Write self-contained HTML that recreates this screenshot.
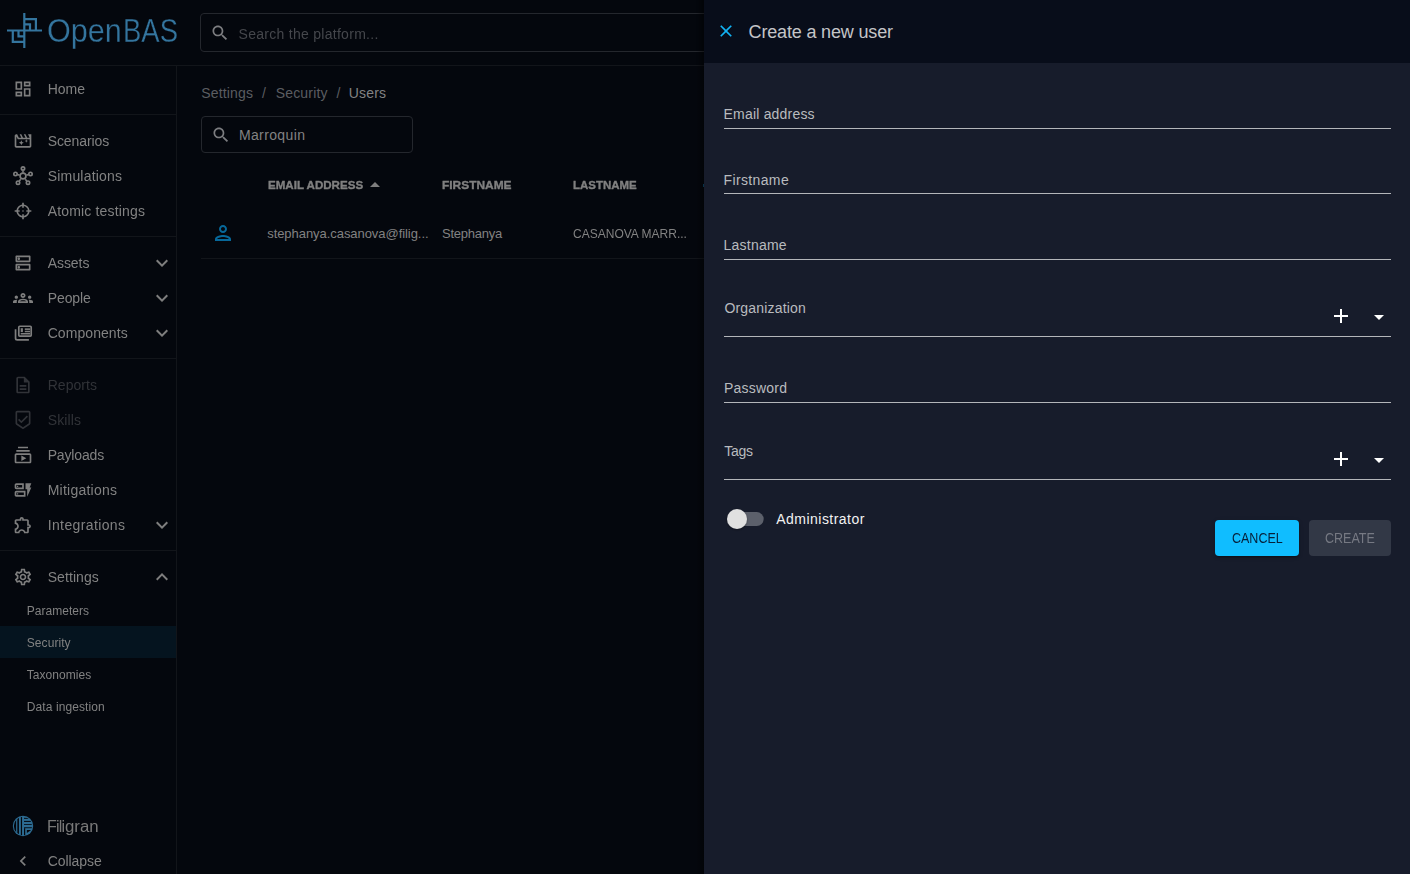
<!DOCTYPE html>
<html lang="en"><head><meta charset="utf-8"><title>OpenBAS - Users</title>
<style>
html,body{margin:0;padding:0}
body{width:1410px;height:874px;overflow:hidden;position:relative;background:#04070d;font-family:"Liberation Sans",sans-serif}
.a{position:absolute}
.t{position:absolute;white-space:nowrap;line-height:20px;height:20px;margin:0;font-weight:400}
button{border:0;padding:0;margin:0;font:inherit;display:block;text-align:left;overflow:visible}
.ic{position:absolute;display:block}
.ln{position:absolute;background:#12151a}
.layer{position:absolute;overflow:hidden;will-change:transform}
</style></head>
<body>
<nav id="sidebar" class="layer" style="left:0;top:0;width:177px;height:874px">
<div class="ln" style="left:0;top:65px;width:177px;height:1px"></div>
<div class="ln" style="left:176px;top:66px;width:1px;height:808px"></div>
<div class="ln" style="left:0;top:114px;width:176px;height:1px"></div>
<div class="ln" style="left:0;top:236px;width:176px;height:1px"></div>
<div class="ln" style="left:0;top:358px;width:176px;height:1px"></div>
<div class="ln" style="left:0;top:550px;width:176px;height:1px"></div>
<div class="a" style="left:0;top:626px;width:176px;height:32px;background:#05141f"></div>
<svg class="ic" style="left:0;top:0" width="48" height="60" viewBox="0 0 48 60" fill="none" stroke="#34759e" stroke-width="2.2"><path d="M24.3 13v35M7 30.5h35"/><path d="M24.3 19.1H35.9V30.5M24.3 24.4H30V30.5"/><path d="M12.8 30.5V41.9H24.3M18.5 30.5V36.3H24.3"/></svg>
<svg class="ic" style="left:13px;top:78.5px" width="20" height="20" viewBox="0 0 24 24" fill="#7e7e7e" ><path d="M19 5v2h-4V5h4M9 5v6H5V5h4m10 8v6h-4v-6h4M9 17v2H5v-2h4M21 3h-8v6h8V3zM11 3H3v10h8V3zm10 8h-8v10h8V11zm-10 4H3v6h8v-6z"/></svg>
<svg class="ic" style="left:13px;top:130.5px" width="20" height="20" viewBox="0 0 24 24" fill="#7e7e7e" ><path d="M10 11l-.94 2.06L7 14l2.06.94L10 17l.94-2.06L13 14l-2.06-.94zm8.01-7l2 4h-3l-2-4h-2l2 4h-3l-2-4h-2l2 4h-3l-2-4h-1c-1.1 0-1.99.9-1.99 2l-.01 12c0 1.1.9 2 2 2h16c1.1 0 1.99-.9 1.99-2V4h-3.990zm2 14h-16V6.470L5.770 10H16l-.63 1.370L14 12l1.370.63L16 14l.63-1.370L18 12l-1.370-.63L16 10h4.010v8z"/></svg>
<svg class="ic" style="left:13px;top:200.5px" width="20" height="20" viewBox="0 0 24 24" fill="#7e7e7e" ><path d="M11,2V4.070C7.380,4.530 4.530,7.380 4.070,11H2V13H4.070C4.530,16.620 7.380,19.470 11,19.930V22H13V19.930C16.620,19.470 19.470,16.620 19.930,13H22V11H19.930C19.470,7.380 16.620,4.530 13,4.070V2M11,6.080V8H13V6.090C15.500,6.500 17.500,8.500 17.920,11H16V13H17.910C17.500,15.500 15.500,17.500 13,17.920V16H11V17.910C8.500,17.500 6.500,15.500 6.080,13H8V11H6.090C6.500,8.500 8.500,6.500 11,6.080M12,11A1,1 0 0,0 11,12A1,1 0 0,0 12,13A1,1 0 0,0 13,12A1,1 0 0,0 12,11Z"/></svg>
<svg class="ic" style="left:13px;top:252.5px" width="20" height="20" viewBox="0 0 24 24" fill="#7e7e7e" ><path d="M19 15v4H5v-4h14m1-2H4c-.55 0-1 .45-1 1v6c0 .55.45 1 1 1h16c.55 0 1-.45 1-1v-6c0-.55-.45-1-1-1zM7 18.500c-.82 0-1.500-.67-1.500-1.500s.68-1.500 1.500-1.500 1.500.67 1.500 1.500-.67 1.500-1.500 1.500zM19 5v4H5V5h14m1-2H4c-.55 0-1 .45-1 1v6c0 .55.45 1 1 1h16c.55 0 1-.45 1-1V4c0-.55-.45-1-1-1zM7 8.500c-.82 0-1.500-.67-1.500-1.500S6.180 5.500 7 5.500s1.500.68 1.500 1.500S7.830 8.500 7 8.500z"/></svg>
<svg class="ic" style="left:13px;top:287.5px" width="20" height="20" viewBox="0 0 24 24" fill="#7e7e7e" ><path d="M4 13c1.100 0 2-.9 2-2s-.9-2-2-2-2 .9-2 2 .9 2 2 2zm1.130 1.100c-.37-.06-.74-.1-1.130-.1-.99 0-1.930.21-2.780.58C.48 14.900 0 15.620 0 16.430V18h4.500v-1.610c0-.83.23-1.610.63-2.290zM20 13c1.100 0 2-.9 2-2s-.9-2-2-2-2 .9-2 2 .9 2 2 2zm4 3.430c0-.81-.48-1.530-1.220-1.850-.85-.37-1.790-.58-2.780-.58-.39 0-.76.04-1.130.1.400.68.630 1.460.630 2.290V18H24v-1.570zm-7.760-2.780c-1.170-.52-2.610-.9-4.240-.9-1.630 0-3.070.39-4.240.9C6.680 14.130 6 15.210 6 16.390V18h12v-1.610c0-1.180-.68-2.260-1.760-2.740zM8.070 16c.09-.23.130-.39.910-.69.970-.38 1.990-.56 3.020-.56s2.050.18 3.020.56c.77.300.810.460.910.690H8.070zM12 8c.55 0 1 .45 1 1s-.45 1-1 1-1-.45-1-1 .45-1 1-1m0-2c-1.660 0-3 1.340-3 3s1.340 3 3 3 3-1.340 3-3-1.340-3-3-3z"/></svg>
<svg class="ic" style="left:13px;top:374.5px" width="20" height="20" viewBox="0 0 24 24" fill="#313338" ><path d="M8 16h8v2H8zm0-4h8v2H8zm6-10H6c-1.100 0-2 .9-2 2v16c0 1.100.89 2 1.990 2H18c1.100 0 2-.9 2-2V8l-6-6zm4 18H6V4h7v5h5v11z"/></svg>
<svg class="ic" style="left:13px;top:409.5px" width="20" height="20" viewBox="0 0 24 24" fill="#313338" ><path d="M19 1H5c-1.100 0-1.990.9-1.990 2L3 15.930c0 .69.35 1.300.88 1.660L12 23l8.110-5.410c.53-.36.88-.97.88-1.660L21 3c0-1.100-.9-2-2-2zm-7 19.600l-7-4.660V3h14v12.930l-7 4.670zm-2.010-7.420l-2.580-2.590L6 12l4 4 8-8-1.420-1.410z"/></svg>
<svg class="ic" style="left:13px;top:444.5px" width="20" height="20" viewBox="0 0 24 24" fill="#7e7e7e" ><path d="M4 6h16v2H4zm2-4h12v2H6zm14 8H4c-1.100 0-2 .9-2 2v8c0 1.100.9 2 2 2h16c1.100 0 2-.9 2-2v-8c0-1.100-.9-2-2-2zm0 10H4v-8h16v8zm-10-7.270v6.530L16 16z"/></svg>
<svg class="ic" style="left:13px;top:479.5px" width="20" height="20" viewBox="0 0 24 24" fill="#7e7e7e" fill-rule="evenodd"><path d="M17 20v-9h-2V4h7l-2 5h2l-5 11zM15 13v7H4c-1.100 0-2-.9-2-2v-3c0-1.100.9-2 2-2h11zM13 15H4v3h9v-3zM6.250 15.750h-1.500v1.500h1.500v-1.500zM13 4v7H4c-1.100 0-2-.9-2-2V6c0-1.100.9-2 2-2h9zM11 6H4v3h7V6zM6.250 6.750h-1.500v1.500h1.500v-1.500z"/></svg>
<svg class="ic" style="left:13px;top:514.5px" width="20" height="20" viewBox="0 0 24 24" fill="#7e7e7e" ><path d="M10.500 4.500c.28 0 .5.22.5.5v2h6v6h2c.28 0 .5.22.5.5s-.22.5-.5.5h-2v6h-2.120c-.68-1.750-2.390-3-4.380-3s-3.700 1.250-4.380 3H4v-2.120c1.750-.68 3-2.390 3-4.380 0-1.990-1.240-3.700-2.990-4.380L4 7h6V5c0-.28.22-.5.5-.5m0-2C9.120 2.500 8 3.620 8 5H4c-1.100 0-1.990.9-1.990 2v3.800h.29c1.490 0 2.700 1.210 2.700 2.700s-1.210 2.700-2.700 2.700H2V20c0 1.100.9 2 2 2h3.800v-.3c0-1.490 1.210-2.700 2.700-2.700s2.700 1.210 2.700 2.700v.3H17c1.100 0 2-.9 2-2v-4c1.380 0 2.500-1.120 2.500-2.500S20.380 11 19 11V7c0-1.100-.9-2-2-2h-4c0-1.380-1.120-2.500-2.500-2.500z"/></svg>
<svg class="ic" style="left:13px;top:566.5px" width="20" height="20" viewBox="0 0 24 24" fill="#7e7e7e" ><path d="M19.430 12.980c.04-.32.07-.64.07-.98 0-.34-.03-.66-.07-.98l2.110-1.650c.19-.15.24-.42.12-.64l-2-3.460c-.09-.16-.26-.25-.44-.25-.06 0-.12.010-.17.030l-2.490 1c-.52-.4-1.080-.73-1.690-.98l-.38-2.650C14.460 2.180 14.250 2 14 2h-4c-.25 0-.46.18-.49.42l-.38 2.650c-.61.25-1.170.59-1.690.98l-2.490-1c-.06-.02-.12-.03-.18-.03-.17 0-.34.09-.43.25l-2 3.460c-.13.22-.07.49.12.64l2.110 1.650c-.04.32-.07.65-.07.98 0 .33.03.66.07.98l-2.110 1.650c-.19.15-.24.42-.12.64l2 3.460c.09.16.26.25.44.25.06 0 .12-.010.17-.030l2.490-1c.52.4 1.080.73 1.690.98l.38 2.650c.03.24.24.42.49.42h4c.25 0 .46-.18.49-.42l.38-2.650c.61-.25 1.170-.59 1.690-.98l2.490 1c.06.02.12.03.18.03.17 0 .34-.09.43-.25l2-3.460c.12-.22.07-.49-.12-.64l-2.110-1.650zm-1.980-1.710c.04.31.05.52.05.73 0 .21-.02.43-.05.73l-.14 1.130.89.7 1.080.84-.7 1.210-1.270-.51-1.040-.42-.9.68c-.43.32-.84.56-1.250.73l-1.060.43-.16 1.130-.2 1.350h-1.400l-.19-1.350-.16-1.130-1.060-.43c-.43-.18-.83-.41-1.230-.71l-.91-.7-1.060.43-1.270.51-.7-1.210 1.080-.84.89-.7-.14-1.130c-.03-.31-.05-.54-.05-.74s.02-.43.05-.73l.14-1.130-.89-.7-1.080-.84.7-1.210 1.270.51 1.040.42.9-.68c.43-.32.84-.56 1.250-.73l1.060-.43.16-1.130.2-1.350h1.390l.19 1.350.16 1.130 1.060.43c.43.18.83.41 1.230.71l.91.7 1.060-.43 1.270-.51.7 1.210-1.070.85-.89.7.14 1.130zM12 8c-2.210 0-4 1.790-4 4s1.790 4 4 4 4-1.790 4-4-1.790-4-4-4zm0 6c-1.100 0-2-.9-2-2s.9-2 2-2 2 .9 2 2-.9 2-2 2z"/></svg>
<svg class="ic" style="left:13px;top:165.500px" width="20" height="20" viewBox="0 0 24 24" fill="none" stroke="#7e7e7e" stroke-width="2"><circle cx="12" cy="12" r="3.500"/><circle cx="12" cy="3" r="2"/><circle cx="3" cy="9.500" r="2"/><circle cx="21" cy="9.500" r="2"/><circle cx="6" cy="20" r="2"/><circle cx="18" cy="20" r="2"/><path d="M12 5.500v2.500M5.400 10.300l2.500.83M18.600 10.300l-2.500.83M7.550 18.050l1.700-2.130M16.450 18.050l-1.700-2.130" stroke-width="1.900"/></svg>
<svg class="ic" style="left:13px;top:322px" width="22" height="22" viewBox="13 322 22 22" fill="none" stroke="#7e7e7e" stroke-width="1.700"><rect x="18.800" y="326.250" width="12.400" height="9.950" rx=".9"/><path d="M15.550 329.200V338.300Q15.550 339.950 17.200 339.950H28.900"/><path d="M21.800 328.200V332.100" stroke-width="2.200"/><path d="M24.800 329.150H30" stroke-width="1.600"/><path d="M24.800 331.500H30M20.700 333.750H30" stroke-width="1.300"/></svg>
<svg class="ic" style="left:150px;top:250.5px" width="24" height="24" viewBox="0 0 24 24" fill="#7e7e7e" ><path d="M16.590 8.590L12 13.170 7.410 8.590 6 10l6 6 6-6z"/></svg>
<svg class="ic" style="left:150px;top:285.5px" width="24" height="24" viewBox="0 0 24 24" fill="#7e7e7e" ><path d="M16.590 8.590L12 13.170 7.410 8.590 6 10l6 6 6-6z"/></svg>
<svg class="ic" style="left:150px;top:320.5px" width="24" height="24" viewBox="0 0 24 24" fill="#7e7e7e" ><path d="M16.590 8.590L12 13.170 7.410 8.590 6 10l6 6 6-6z"/></svg>
<svg class="ic" style="left:150px;top:512.5px" width="24" height="24" viewBox="0 0 24 24" fill="#7e7e7e" ><path d="M16.590 8.590L12 13.170 7.410 8.590 6 10l6 6 6-6z"/></svg>
<svg class="ic" style="left:150px;top:564.5px" width="24" height="24" viewBox="0 0 24 24" fill="#7e7e7e" ><path d="M12 8l-6 6 1.410 1.410L12 10.830l4.590 4.580L18 14z"/></svg>
<svg class="ic" style="left:13px;top:851px" width="20" height="20" viewBox="0 0 24 24" fill="#7e7e7e" ><path d="M15.410 7.410L14 6l-6 6 6 6 1.410-1.410L10.830 12z"/></svg>
<svg class="ic" style="left:12px;top:815px" width="22" height="22" viewBox="12 815 22 22"><defs><clipPath id="fc"><circle cx="23" cy="826" r="9.150"/></clipPath></defs><circle cx="23" cy="826" r="10.200" fill="#2c6b92"/><g clip-path="url(#fc)" fill="#04070d"><rect x="12" y="815" width="4.100" height="22"/><rect x="17.350" y="815" width="1.600" height="22"/><rect x="20.850" y="815" width="1.200" height="22"/><rect x="24" y="817.800" width="10" height="1"/><rect x="24" y="820.900" width="10" height="1"/><rect x="24" y="824.150" width="10" height=".8"/><rect x="24" y="827.300" width="10" height=".9"/><rect x="24" y="828.200" width="1.200" height="9"/><path d="M26.900 829.900H31.200L26.900 833z"/></g></svg>
<span class="t" style="left:47.70px;top:79.00px;font-size:14px;color:#828282;letter-spacing:-0.020px;">Home</span>
<span class="t" style="left:47.70px;top:131.00px;font-size:14px;color:#828282;letter-spacing:-0.082px;">Scenarios</span>
<span class="t" style="left:47.70px;top:166.00px;font-size:14px;color:#828282;letter-spacing:0.193px;">Simulations</span>
<span class="t" style="left:47.70px;top:201.00px;font-size:14px;color:#828282;letter-spacing:0.170px;">Atomic testings</span>
<span class="t" style="left:47.70px;top:253.00px;font-size:14px;color:#828282;letter-spacing:-0.063px;">Assets</span>
<span class="t" style="left:47.70px;top:288.00px;font-size:14px;color:#828282;letter-spacing:-0.081px;">People</span>
<span class="t" style="left:47.70px;top:323.00px;font-size:14px;color:#828282;letter-spacing:0.069px;">Components</span>
<span class="t" style="left:47.70px;top:375.00px;font-size:14px;color:#313338;letter-spacing:0.047px;">Reports</span>
<span class="t" style="left:47.70px;top:410.00px;font-size:14px;color:#313338;letter-spacing:0.126px;">Skills</span>
<span class="t" style="left:47.70px;top:445.00px;font-size:14px;color:#828282;letter-spacing:-0.156px;">Payloads</span>
<span class="t" style="left:47.70px;top:480.00px;font-size:14px;color:#828282;letter-spacing:0.238px;">Mitigations</span>
<span class="t" style="left:47.70px;top:515.00px;font-size:14px;color:#828282;letter-spacing:0.377px;">Integrations</span>
<span class="t" style="left:47.70px;top:567.00px;font-size:14px;color:#828282;letter-spacing:0.073px;">Settings</span>
<span class="t" style="left:26.80px;top:601.00px;font-size:12px;color:#828282;letter-spacing:0.031px;">Parameters</span>
<span class="t" style="left:26.80px;top:633.00px;font-size:12px;color:#828282;letter-spacing:0.065px;">Security</span>
<span class="t" style="left:26.80px;top:665.00px;font-size:12px;color:#828282;letter-spacing:0.041px;">Taxonomies</span>
<span class="t" style="left:26.80px;top:697.00px;font-size:12px;color:#828282;letter-spacing:0.089px;">Data ingestion</span>
<span class="t" style="left:47.00px;top:816.50px;font-size:16px;color:#787878;letter-spacing:-0.828px;">Fili</span>
<span class="t" style="left:65.40px;top:816.50px;font-size:16px;color:#787878;transform:scaleX(1.0506);transform-origin:0 0;">gran</span>
<span class="t" style="left:47.70px;top:851.00px;font-size:14px;color:#828282;letter-spacing:-0.070px;">Collapse</span>
<span class="t" style="left:47.36px;top:11.00px;font-size:32.4px;color:#34759e;line-height:40px;height:40px;-webkit-text-stroke:0.3px #04070d;transform:scaleX(0.9446);transform-origin:0 0;">Open</span>
<span class="t" style="left:122.50px;top:11.00px;font-size:32.4px;color:#34759e;line-height:40px;height:40px;-webkit-text-stroke:0.3px #04070d;transform:scaleX(0.8488);transform-origin:0 0;">BAS</span>
</nav>
<header id="topbar" class="layer" style="left:177px;top:0;width:527px;height:66px">
<div class="ln" style="left:0;top:65px;width:527px;height:1px"></div>
<div class="a" style="left:23px;top:13px;width:540px;height:37px;border:1px solid #24272d;border-radius:4px"></div>
<svg class="ic" style="left:32.80000000000001px;top:22.8px" width="20" height="20" viewBox="0 0 24 24" fill="#7c7d80" ><path d="M15.500 14h-.79l-.28-.27C15.410 12.590 16 11.110 16 9.500 16 5.910 13.090 3 9.500 3S3 5.910 3 9.500 5.910 16 9.500 16c1.610 0 3.090-.59 4.230-1.570l.27.28v.79l5 4.990L20.490 19l-4.990-5zm-6 0C7.010 14 5 11.990 5 9.500S7.010 5 9.500 5 14 7.010 14 9.500 11.990 14 9.500 14z"/></svg>
<span class="t" style="left:61.60px;top:24.00px;font-size:14px;color:#45474c;letter-spacing:0.279px;">Search the platform...</span>
<div class="a" style="left:519px;top:0;width:8px;height:66px;background:linear-gradient(90deg,rgba(0,0,0,0),rgba(0,0,0,.4))"></div>
</header>
<main class="a" style="left:0;top:0">
<div class="a" style="left:201px;top:116px;width:210px;height:35px;border:1px solid #24272d;border-radius:4px"></div>
<svg class="ic" style="left:210.8px;top:125.3px" width="20" height="20" viewBox="0 0 24 24" fill="#7c7d80" ><path d="M15.500 14h-.79l-.28-.27C15.410 12.590 16 11.110 16 9.500 16 5.910 13.090 3 9.500 3S3 5.910 3 9.500 5.910 16 9.500 16c1.610 0 3.090-.59 4.230-1.570l.27.28v.79l5 4.990L20.490 19l-4.990-5zm-6 0C7.010 14 5 11.990 5 9.500S7.010 5 9.500 5 14 7.010 14 9.500 11.990 14 9.500 14z"/></svg>
<svg class="ic" style="left:363px;top:172.5px" width="24" height="24" viewBox="0 0 24 24" fill="#7e7e7e" ><path d="M7 14l5-5 5 5z"/></svg>
<svg class="ic" style="left:211px;top:221px" width="24" height="24" viewBox="0 0 24 24" fill="#07689a" ><path d="M12 6c1.100 0 2 .9 2 2s-.9 2-2 2-2-.9-2-2 .9-2 2-2m0 10c2.700 0 5.800 1.290 6 2H6c.23-.72 3.310-2 6-2m0-12C9.790 4 8 5.790 8 8s1.790 4 4 4 4-1.790 4-4-1.790-4-4-4zm0 10c-2.670 0-8 1.340-8 4v2h16v-2c0-2.660-5.330-4-8-4z"/></svg>
<div class="ln" style="left:201px;top:258px;width:503px;height:1px"></div>
<div class="a" style="left:703px;top:184px;width:1px;height:3px;background:#0a4f74"></div>
<div class="a" style="left:696px;top:66px;width:8px;height:808px;background:linear-gradient(90deg,rgba(0,0,0,0),rgba(0,0,0,.4))"></div>
<span class="t" style="left:201.30px;top:83.00px;font-size:14px;color:#5b5d61;letter-spacing:0.159px;">Settings</span>
<span class="t" style="left:262.00px;top:83.00px;font-size:14px;color:#5b5d61;">/</span>
<span class="t" style="left:275.70px;top:83.00px;font-size:14px;color:#5b5d61;letter-spacing:0.175px;">Security</span>
<span class="t" style="left:336.50px;top:83.00px;font-size:14px;color:#5b5d61;">/</span>
<span class="t" style="left:348.80px;top:83.00px;font-size:14px;color:#828282;letter-spacing:0.160px;">Users</span>
<span class="t" style="left:238.90px;top:125.00px;font-size:14px;color:#828282;letter-spacing:0.382px;">Marroquin</span>
<span class="t" style="left:267.60px;top:175.00px;font-size:11px;color:#808080;font-weight:700;-webkit-text-stroke:0.35px #808080;transform:scaleX(1.0515);transform-origin:0 0;">EMAIL ADDRESS</span>
<span class="t" style="left:442.00px;top:175.00px;font-size:11px;color:#808080;font-weight:700;-webkit-text-stroke:0.35px #808080;transform:scaleX(1.0842);transform-origin:0 0;">FIRSTNAME</span>
<span class="t" style="left:573.00px;top:175.00px;font-size:11px;color:#808080;font-weight:700;-webkit-text-stroke:0.35px #808080;transform:scaleX(1.0416);transform-origin:0 0;">LASTNAME</span>
<span class="t" style="left:267.20px;top:223.50px;font-size:13px;color:#828282;letter-spacing:-0.053px;">stephanya.casanova@filig...</span>
<span class="t" style="left:442.00px;top:223.50px;font-size:13px;color:#828282;letter-spacing:-0.242px;">Stephanya</span>
<span class="t" style="left:573.00px;top:223.50px;font-size:13px;color:#828282;transform:scaleX(0.9239);transform-origin:0 0;">CASANOVA MARR...</span>
</main>
<aside id="drawer" role="dialog" class="a" style="left:0;top:0">
<div class="a" style="left:704px;top:0;width:706px;height:874px;background:#171c2b"></div>
<div class="a" style="left:704px;top:0;width:706px;height:63px;background:#080d1a"></div>
<svg class="ic" style="left:716px;top:21px" width="20" height="20" viewBox="0 0 24 24" fill="#12b3f4" ><path d="M19 6.410L17.590 5 12 10.590 6.410 5 5 6.410 10.590 12 5 17.590 6.410 19 12 13.410 17.590 19 19 17.590 13.410 12z"/></svg>
<div class="a" style="left:724px;top:128px;width:667px;height:1px;background:#b4b6ba"></div>
<div class="a" style="left:724px;top:193px;width:667px;height:1px;background:#b4b6ba"></div>
<div class="a" style="left:724px;top:259px;width:667px;height:1px;background:#b4b6ba"></div>
<div class="a" style="left:724px;top:336px;width:667px;height:1px;background:#b4b6ba"></div>
<div class="a" style="left:724px;top:402px;width:667px;height:1px;background:#b4b6ba"></div>
<div class="a" style="left:724px;top:479px;width:667px;height:1px;background:#b4b6ba"></div>
<svg class="ic" style="left:1329px;top:304px" width="24" height="24" viewBox="0 0 24 24" fill="#ffffff" ><path d="M19 13h-6v6h-2v-6H5v-2h6V5h2v6h6v2z"/></svg>
<svg class="ic" style="left:1367px;top:305px" width="24" height="24" viewBox="0 0 24 24" fill="#ffffff" ><path d="M7 10l5 5 5-5z"/></svg>
<svg class="ic" style="left:1329px;top:447px" width="24" height="24" viewBox="0 0 24 24" fill="#ffffff" ><path d="M19 13h-6v6h-2v-6H5v-2h6V5h2v6h6v2z"/></svg>
<svg class="ic" style="left:1367px;top:448px" width="24" height="24" viewBox="0 0 24 24" fill="#ffffff" ><path d="M7 10l5 5 5-5z"/></svg>
<svg class="ic" style="left:717px;top:499px" width="58" height="38" viewBox="717 499 58 38"><defs><filter id="sh" x="-30%" y="-30%" width="160%" height="160%"><feDropShadow dx="0" dy="1" stdDeviation=".9" flood-color="#000" flood-opacity=".35"/></filter></defs><rect x="729.700" y="512.100" width="34" height="14" rx="7" fill="#5c606b"/><circle cx="737" cy="519.050" r="10" fill="#e0e0e0" filter="url(#sh)"/></svg>
<h2 class="t" style="left:748.60px;top:18.50px;font-size:18px;color:#c4c5c8;letter-spacing:-0.168px;line-height:26px;height:26px;">Create a new user</h2>
<label class="t" style="left:723.60px;top:104.00px;font-size:14px;color:#b9bbbf;letter-spacing:0.191px;">Email address</label>
<label class="t" style="left:723.60px;top:170.00px;font-size:14px;color:#b9bbbf;letter-spacing:0.356px;">Firstname</label>
<label class="t" style="left:723.60px;top:235.00px;font-size:14px;color:#b9bbbf;letter-spacing:0.215px;">Lastname</label>
<label class="t" style="left:724.40px;top:298.00px;font-size:14px;color:#b9bbbf;letter-spacing:0.182px;">Organization</label>
<label class="t" style="left:724.00px;top:378.00px;font-size:14px;color:#b9bbbf;letter-spacing:0.217px;">Password</label>
<label class="t" style="left:724.20px;top:441.00px;font-size:14px;color:#b9bbbf;letter-spacing:-0.257px;">Tags</label>
<label class="t" style="left:776.30px;top:509.00px;font-size:14px;color:#f2f2f2;letter-spacing:0.466px;">Administrator</label>
<button type="button" class="a" style="left:1215px;top:520px;width:84px;height:36px;border-radius:4px;background:#10bdff;box-shadow:0 3px 1px -2px rgba(0,0,0,.2),0 2px 2px 0 rgba(0,0,0,.14),0 1px 5px 0 rgba(0,0,0,.12)"><span class="t" style="left:16.80px;top:8.00px;font-size:14px;color:#07203a;transform:scaleX(0.8929);transform-origin:0 0;">CANCEL</span></button>
<button type="button" disabled class="a" style="left:1309px;top:520px;width:82px;height:36px;border-radius:4px;background:#323846"><span class="t" style="left:16.30px;top:8.00px;font-size:14px;color:#767983;transform:scaleX(0.8934);transform-origin:0 0;">CREATE</span></button>
</aside>
</body></html>
